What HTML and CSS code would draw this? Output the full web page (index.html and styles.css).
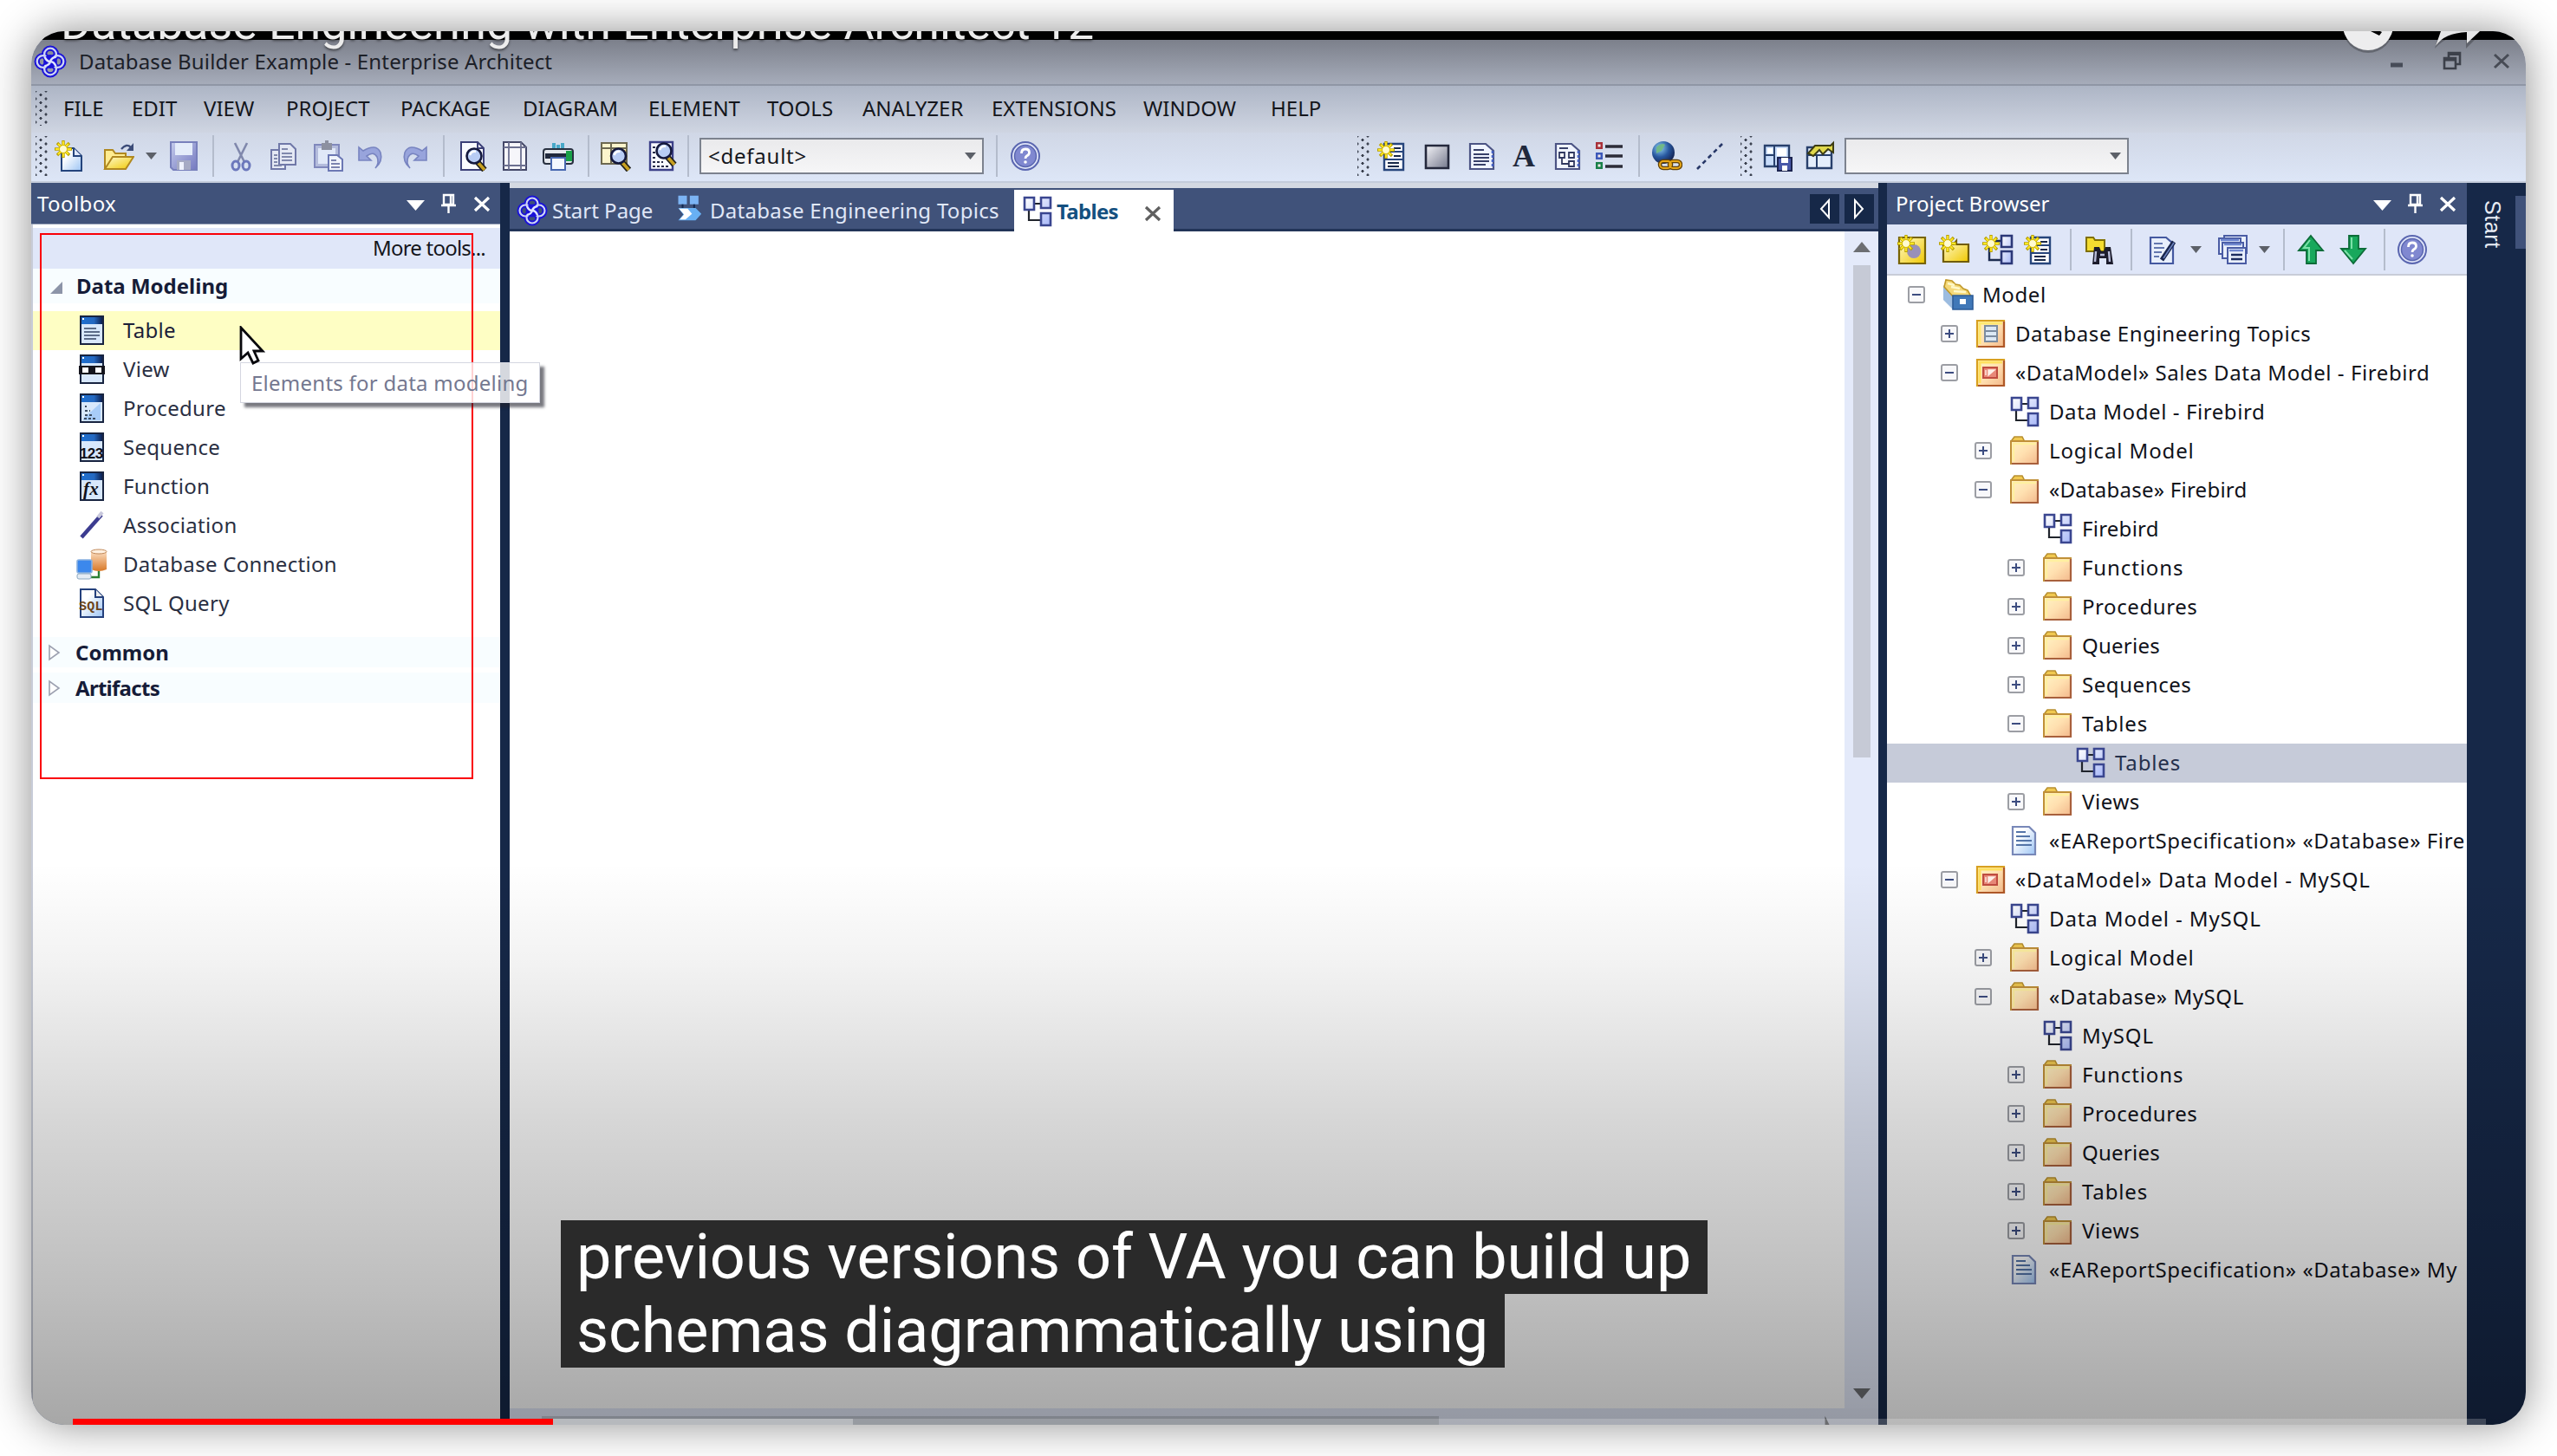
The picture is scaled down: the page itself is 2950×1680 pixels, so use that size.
FILE: index.html
```html
<!DOCTYPE html>
<html lang="en">
<head>
<meta charset="utf-8">
<title>Database Builder Example - Enterprise Architect</title>
<link rel="stylesheet" href="styles.css">
</head>
<body>
<svg class="defs" aria-hidden="true">
  <defs>
    <linearGradient id="gFold" x1="0" y1="0" x2="1" y2="1"><stop offset="0" stop-color="#fff3c4"/><stop offset=".5" stop-color="#ffe0b0"/><stop offset="1" stop-color="#f3b98c"/></linearGradient>
    <linearGradient id="gYel" x1="0" y1="0" x2="1" y2="1"><stop offset="0" stop-color="#fffbd0"/><stop offset="1" stop-color="#f0c800"/></linearGradient>
    <linearGradient id="gPage" x1="0" y1="0" x2="1" y2="1"><stop offset=".3" stop-color="#fff"/><stop offset="1" stop-color="#9cc4f4"/></linearGradient>
    <linearGradient id="gBlue" x1="0" y1="0" x2="1" y2="1"><stop offset="0" stop-color="#fff"/><stop offset="1" stop-color="#a8b8f8"/></linearGradient>
    <linearGradient id="gGrey" x1="0" y1="0" x2="1" y2="1"><stop offset="0" stop-color="#f4f4f8"/><stop offset="1" stop-color="#74788c"/></linearGradient>
    <linearGradient id="gLav" x1="0" y1="0" x2="1" y2="1"><stop offset="0" stop-color="#c4cbec"/><stop offset="1" stop-color="#7479c0"/></linearGradient>
    <linearGradient id="gDb" x1="0" y1="0" x2="0" y2="1"><stop offset="0" stop-color="#ffe8d0"/><stop offset="1" stop-color="#d87828"/></linearGradient>
    <radialGradient id="gGlobe" cx=".35" cy=".3" r=".8"><stop offset="0" stop-color="#8fd0f0"/><stop offset=".5" stop-color="#2858a0"/><stop offset="1" stop-color="#101840"/></radialGradient>
    <linearGradient id="gWin" x1="0" y1="0" x2="1" y2="0"><stop offset="0" stop-color="#1f70d0"/><stop offset=".6" stop-color="#2468c0"/><stop offset="1" stop-color="#0c2050"/></linearGradient>
  </defs>
  <symbol id="star" viewBox="0 0 20 20"><path d="M10 0v20M0 10h20M3 3l14 14M17 3L3 17" stroke="#b8a000" stroke-width="3.4"/><path d="M10 1v18M1 10h18M4 4l12 12M16 4L4 16" stroke="#ffe820" stroke-width="1.8"/><circle cx="10" cy="10" r="4.5" fill="#fffbd0" stroke="#d8bc00"/></symbol>
  <symbol id="lens" viewBox="0 0 26 30"><path d="M15 18l8 9" stroke="#20201c" stroke-width="7"/><path d="M15 18l8 9" stroke="#c8a020" stroke-width="3.5"/><circle cx="11" cy="11" r="8.5" fill="#b8ccf4" stroke="#14183c" stroke-width="2.6"/><path d="M6 10q2-5 7-4" stroke="#fff" stroke-width="2.5" fill="none"/></symbol>
  <symbol id="logo" viewBox="0 0 36 36"><g fill="none" stroke="#1a12d8" stroke-width="6"><circle cx="18" cy="10" r="6.5"/><circle cx="18" cy="26" r="6.5"/><circle cx="10" cy="18" r="6.5"/><circle cx="26" cy="18" r="6.5"/></g><g fill="none" stroke="#cdd4f4" stroke-width="2.2"><circle cx="18" cy="10" r="6.5"/><circle cx="18" cy="26" r="6.5"/><circle cx="10" cy="18" r="6.5"/><circle cx="26" cy="18" r="6.5"/></g><circle cx="18" cy="18" r="7.5" fill="#1a12d8"/><path d="M12 13q2 5 6 5t6 5M24 13q-5 1-6 5t-6 5" stroke="#dfe4ff" stroke-width="2.4" fill="none"/></symbol>
  <symbol id="new" viewBox="0 0 36 36"><path d="M9 9h14l9 9v17H9z" fill="url(#gPage)" stroke="#24447c" stroke-width="2"/><path d="M23 9v9h9" fill="#dfe8fa" stroke="#24447c" stroke-width="2"/><use href="#star" x="1" y="0" width="20" height="20"/></symbol>
  <symbol id="open" viewBox="0 0 36 36"><path d="M2 33V11h9l3 4h12v5" fill="#ffec90" stroke="#b08820" stroke-width="2"/><path d="M2 33l9-14h24l-9 14z" fill="url(#gYel)" stroke="#b08820" stroke-width="2"/><path d="M21 10q6-7 11-2" fill="none" stroke="#3c4c78" stroke-width="2.4"/><path d="M35 3v9h-8z" fill="#3c4c78"/></symbol>
  <symbol id="save" viewBox="0 0 36 36"><path d="M3 2h30v32H6l-3-3z" fill="url(#gLav)" stroke="#7880bc" stroke-width="2"/><path d="M8 3h20v14H8z" fill="#e4ecfa"/><path d="M10 23h16v11H10z" fill="#a6abc4"/><path d="M13 25h5v9h-5z" fill="#eef2fc"/></symbol>
  <symbol id="cut" viewBox="0 0 36 36"><path d="M11 3l11 22M25 3L14 25" stroke="#8088ac" stroke-width="2.6"/><g fill="none" stroke="#6c78bc" stroke-width="3"><ellipse cx="12" cy="29" rx="4" ry="5"/><ellipse cx="24" cy="29" rx="4" ry="5"/></g></symbol>
  <symbol id="copy" viewBox="0 0 36 36"><g fill="#e4e8f4" stroke="#7078a8" stroke-width="2"><path d="M4 11h16v22H4z"/><path d="M13 4h13l6 6v18H13z"/></g><path d="M16 10h7M16 15h12M16 19h12M16 23h12M7 17h4M7 21h4M7 25h4M7 29h9" stroke="#8088ac" stroke-width="2"/></symbol>
  <symbol id="paste" viewBox="0 0 36 36"><path d="M2 5h28v26H2z" fill="#b4bcdc" stroke="#8088bc" stroke-width="2"/><path d="M6 9h20v18H6z" fill="#e0e8f8"/><path d="M10 3h12v8H10z" fill="#8c90a0"/><path d="M14 0h4v4h-4z" fill="#8c90a0"/><path d="M18 17h10l6 5v13H18z" fill="#f0f4fc" stroke="#6c78b4" stroke-width="2"/><path d="M21 23h6M21 27h10M21 31h10" stroke="#7c84b0" stroke-width="2"/></symbol>
  <symbol id="undo" viewBox="0 0 36 36"><path d="M5 8v15h14l-5-5q8-6 12 1 3 7-2 13 9-8 6-18-5-11-20-2z" fill="#98a4dc" stroke="#7884c0" stroke-width="1.6"/></symbol>
  <symbol id="preview" viewBox="0 0 36 36"><path d="M4 2h19l7 7v25H4z" fill="#fafbff" stroke="#3c4078" stroke-width="2"/><path d="M23 2v7h7" fill="none" stroke="#3c4078" stroke-width="2"/><use href="#lens" x="8" y="7" width="26" height="30"/></symbol>
  <symbol id="page" viewBox="0 0 36 36"><path d="M5 2h20l6 6v26H5z" fill="#f6f6fa" stroke="#444868" stroke-width="2"/><path d="M11 2v32M25 2v32M5 8h26M5 29h26" stroke="#6c7090" stroke-width="1.8"/></symbol>
  <symbol id="print" viewBox="0 0 36 36"><path d="M13 9V3M18 9V5M23 9V3" stroke="#48a8c8" stroke-width="4"/><rect x="1" y="10" width="34" height="17" rx="3" fill="#e4e8ee" stroke="#283040" stroke-width="2"/><path d="M3 15h24v6H3z" fill="#20283c"/><path d="M27 12h7v12h-7z" fill="#18a048"/><path d="M10 20h16v14H10z" fill="#f4f8ff" stroke="#4868b0" stroke-width="2"/></symbol>
  <symbol id="search" viewBox="0 0 36 36"><path d="M2 3h29v24H2z" fill="#fbf4cc" stroke="#6c6850" stroke-width="2"/><path d="M2 9h29M13 3v24" stroke="#6c6850" stroke-width="2"/><path d="M16 11h14v14H16z" fill="#f0c870"/><use href="#lens" x="10" y="7" width="27" height="30"/></symbol>
  <symbol id="find" viewBox="0 0 36 36"><path d="M5 2h26v32H5z" fill="#f8f9ff" stroke="#3c4088" stroke-width="2.4"/><path d="M8 8h5M8 14h3M8 20h4M8 25h12M8 30h18" stroke="#282c48" stroke-width="2" stroke-dasharray="3 2"/><use href="#lens" x="10" y="1" width="26" height="30"/></symbol>
  <symbol id="help" viewBox="0 0 36 36"><circle cx="18" cy="18" r="16" fill="#dfe4f8" stroke="#5a66b0" stroke-width="2"/><circle cx="18" cy="18" r="12.5" fill="#8088d0" stroke="#5a66b0" stroke-width="1.5"/><path d="M13.500 15q0-5 4.500-5t4.500 4q0 2.500-3 4-1.500 1-1.500 3" fill="none" stroke="#fff" stroke-width="2.800"/><circle cx="18" cy="25" r="1.800" fill="#fff"/></symbol>
  <symbol id="elem" viewBox="0 0 36 36"><path d="M9 4h22v30H9z" fill="#fdfdff" stroke="#27457c" stroke-width="2.4"/><path d="M9 13h22M9 22h22" stroke="#27457c" stroke-width="2"/><path d="M20 9h8M20 18h8M13 26h13M13 30h13" stroke="#182848" stroke-width="2.200"/><use href="#star" x="1" y="1" width="20" height="20"/></symbol>
  <symbol id="rect" viewBox="0 0 36 36"><path d="M5 6h26v26H5z" fill="url(#gGrey)" stroke="#24283c" stroke-width="2.6"/></symbol>
  <symbol id="doc" viewBox="0 0 36 36"><path d="M5 4h18l9 8v21H5z" fill="#f0f4ff" stroke="#4c5484" stroke-width="2.2"/><path d="M9 11h12M9 16h18M9 20h18M9 24h18M9 28h14" stroke="#384068" stroke-width="2"/><path d="M31 12v20" stroke="#4460c0" stroke-width="2.6" stroke-dasharray="3 2"/></symbol>
  <symbol id="ddoc" viewBox="0 0 36 36"><path d="M5 4h18l9 8v21H5z" fill="#f0f4ff" stroke="#4c5484" stroke-width="2.2"/><path d="M9 9h10" stroke="#384068" stroke-width="2"/><g fill="#fff" stroke="#303860" stroke-width="1.800"><path d="M9 14h6v6H9zM20 14h6v6h-6zM20 24h6v6h-6zM12 20v7h8"/></g><path d="M31 12v20" stroke="#4460c0" stroke-width="2.6" stroke-dasharray="3 2"/></symbol>
  <symbol id="list" viewBox="0 0 36 36"><path d="M2 2h8v8H2z" fill="#a83038"/><path d="M2 14h8v8H2z" fill="#3c58b8"/><path d="M2 25h8v8H2z" fill="#188048"/><path d="M4.500 4.500h3v3h-3zM4.500 16.500h3v3h-3zM4.500 27.500h3v3h-3z" fill="#f4e8e8"/><path d="M13 7h20M13 18h20M13 30h20" stroke="#2c2c38" stroke-width="3.4"/></symbol>
  <symbol id="globe" viewBox="0 0 36 36"><circle cx="14" cy="14" r="13" fill="url(#gGlobe)"/><path d="M6 8q6-6 10-3l-4 7-6 3z" fill="#70b888"/><g fill="none" stroke="#604008" stroke-width="4.500"><rect x="10" y="24" width="13" height="8" rx="4"/><rect x="21" y="24" width="13" height="8" rx="4"/></g><g fill="none" stroke="#e8a818" stroke-width="2"><rect x="10" y="24" width="13" height="8" rx="4"/><rect x="21" y="24" width="13" height="8" rx="4"/></g></symbol>
  <symbol id="dash" viewBox="0 0 36 36"><path d="M3 33L33 3" stroke="#283868" stroke-width="2.600" stroke-dasharray="5 4"/></symbol>
  <symbol id="layout" viewBox="0 0 36 36"><path d="M3 6h28v24H3z" fill="#c8dcfa" stroke="#28406c" stroke-width="2.4"/><path d="M14 6v24M3 17h11" stroke="#28406c" stroke-width="2"/><path d="M6 9h6v6H6zM17 9h11v9H17z" fill="#fff"/><path d="M18 20h16v15H18z" fill="#4858a8" stroke="#1c2450" stroke-width="2"/><path d="M22 20h8v6h-8zM23 29h6v6h-6z" fill="#fff"/></symbol>
  <symbol id="layout2" viewBox="0 0 36 36"><path d="M3 8h28v24H3z" fill="#e4eefc" stroke="#28406c" stroke-width="2.400"/><path d="M14 16v16M3 17h28" stroke="#28406c" stroke-width="2"/><path d="M4 15l8-9h18l3-3v11l-6-4-6 6-4-5-7 7z" fill="#e0d84c" stroke="#3c3c14" stroke-width="2"/></symbol>
  <symbol id="npkg" viewBox="0 0 36 36"><path d="M4 4h30v30H4z" fill="url(#gYel)" stroke="#786400" stroke-width="2.200"/><circle cx="21" cy="20" r="8" fill="#9890b8"/><use href="#star" x="2" y="1" width="20" height="20"/></symbol>
  <symbol id="nfold" viewBox="0 0 36 36"><path d="M5 32V12h12l3-4h0v4h14v20z" fill="url(#gYel)" stroke="#705c00" stroke-width="2.200"/><use href="#star" x="0" y="1" width="20" height="20"/></symbol>
  <symbol id="ndiag" viewBox="0 0 36 36"><path d="M8 16v14h14M14 8h9" stroke="#1c2c50" stroke-width="2.400" fill="none"/><path d="M22 2h12v13H22zM22 20h12v14H22z" fill="url(#gBlue)" stroke="#2c3878" stroke-width="2.600"/><use href="#star" x="0" y="1" width="20" height="20"/></symbol>
  <symbol id="binoc" viewBox="0 0 36 36"><path d="M2 20V4h8l2 3h11v13z" fill="#f4dc30" stroke="#807000" stroke-width="2"/><path d="M9 35l2-20h6l2 5h3l2-5h6l3 20h-8v-7h-8v7z" fill="#1c1c2c"/><path d="M13 20l-1 12M28 20l1 12M18 24h5" stroke="#b8bcd8" stroke-width="2.400"/></symbol>
  <symbol id="edit" viewBox="0 0 36 36"><path d="M4 4h18l8 7v23H4z" fill="#e8effc" stroke="#4458a0" stroke-width="2.200"/><path d="M8 11h10M8 16h12M8 21h9M8 26h6" stroke="#6478b0" stroke-width="2"/><path d="M31 9L17 30" stroke="#18244c" stroke-width="5"/><path d="M31 10L19 28" stroke="#6c84c0" stroke-width="1.500"/></symbol>
  <symbol id="stack" viewBox="0 0 36 36"><g fill="#eaf0fc" stroke="#4a5ca4" stroke-width="2"><path d="M8 2h26v20H8z"/><path d="M2 5h25v18H2z"/><path d="M6 10h24v18H6z"/><path d="M12 16h21v18H12z"/></g><path d="M4 7h21M8 12h20M14 19h16" stroke="#7088d0" stroke-width="2.600"/><path d="M16 24h13M16 29h13" stroke="#1c2c60" stroke-width="2.400"/></symbol>
  <symbol id="up" viewBox="0 0 36 36"><path d="M18 2l14 17h-8v15H13V19H4z" fill="#18a85c" stroke="#0c6c38" stroke-width="1.800"/><path d="M17 7l-7 9h6v15" fill="none" stroke="#7ce0a8" stroke-width="2"/></symbol>
  <symbol id="down" viewBox="0 0 36 36"><path d="M18 34L4 17h9V2h11v15h8z" fill="#18a85c" stroke="#0c6c38" stroke-width="1.800"/><path d="M8 19l9 10M16 4v13" fill="none" stroke="#7ce0a8" stroke-width="2"/></symbol>
  <symbol id="diag" viewBox="0 0 36 36"><path d="M14 9h8M8 16v12h14" stroke="#20242c" stroke-width="2.200" fill="none"/><path d="M3 2h11v14H3zM22 2h11v12H22zM22 20h11v14H22z" fill="url(#gBlue)" stroke="#3a4690" stroke-width="2.600"/></symbol>
  <symbol id="topic" viewBox="0 0 36 36"><path d="M3 1h12v12H3zM19 1h12v12H19z" fill="#7cb4f4"/><path d="M9 13v5M25 13v5" stroke="#102850" stroke-width="2.400"/><path d="M3 18h24l8 8-8 9H3l7-8z" fill="#68b0f4"/><path d="M4 19h12l6 7-9 8H5l6-7z" fill="#fff"/></symbol>
  <symbol id="fold" viewBox="0 0 36 36"><path d="M3 6l3-4h9l2 4v2H3z" fill="#f0c850" stroke="#b89030" stroke-width="1.600"/><path d="M2 7h31v26H2z" fill="url(#gFold)" stroke="#c09038" stroke-width="2"/><path d="M3 33h30V8" fill="none" stroke="#a8603c" stroke-width="2.200"/><path d="M5 30V10h26" fill="none" stroke="#fff0a0" stroke-width="2.400"/></symbol>
  <symbol id="pkg" viewBox="0 0 36 36"><path d="M2 3h31v30H2z" fill="url(#gFold)" stroke="#d8a020" stroke-width="2.200"/><path d="M3 33h30V4" fill="none" stroke="#b05828" stroke-width="2.200"/><path d="M5 30V6h26" fill="none" stroke="#ffe870" stroke-width="3"/><path d="M11 9h14v18H11z" fill="#dce8f4" stroke="#7c8ca0" stroke-width="2"/><path d="M11 15h14M11 21h14" stroke="#7c8ca0" stroke-width="2"/></symbol>
  <symbol id="dm" viewBox="0 0 36 36"><path d="M2 3h31v30H2z" fill="url(#gFold)" stroke="#d8a020" stroke-width="2.200"/><path d="M3 33h30V4" fill="none" stroke="#b05828" stroke-width="2.200"/><path d="M5 30V6h26" fill="none" stroke="#ffe060" stroke-width="3"/><path d="M9 12h16v12H9z" fill="#e88878" stroke="#c04c40" stroke-width="2"/><path d="M12 15v6M15 15h7l-7 6z" fill="#fff0e8" stroke="#fff0e8" stroke-width="1.400"/></symbol>
  <symbol id="cabinet" viewBox="0 0 36 36"><path d="M1 7l11 12v16L1 24z" fill="#9cbce0"/><path d="M2 9L4 1l7 1 4 4 5 1 4 4 5 2 4 7H12z" fill="#f4d878" stroke="#c09828" stroke-width="1.600"/><path d="M6 5l8 2M10 9l10 2M13 14l14 1" stroke="#fff8c8" stroke-width="2.600"/><path d="M12 19h23v16H12z" fill="#4078b8" stroke="#2c5c98" stroke-width="1.600"/><path d="M20 23h7v6h-7z" fill="#fff"/></symbol>
  <symbol id="rep" viewBox="0 0 36 36"><path d="M4 2h19l7 7v25H4z" fill="url(#gPage)" stroke="#7888b8" stroke-width="2.200"/><path d="M8 8h11M8 13h16M8 18h18M8 23h18" stroke="#5474a8" stroke-width="1.800"/></symbol>
  <symbol id="win" viewBox="0 0 28 36"><path d="M1 2h26v32H1z" fill="#d8e8fc" stroke="#182440" stroke-width="2"/><path d="M2 3h24v8H2z" fill="url(#gWin)"/><path d="M3 4h2v2H3z" fill="#fff"/></symbol>
  <symbol id="tbl" viewBox="-4 0 36 36"><use href="#win" width="28" height="36"/><path d="M5 16h14M5 20h18M5 24h18M5 28h14" stroke="#5c6c88" stroke-width="2"/></symbol>
  <symbol id="view" viewBox="-4 0 36 36"><use href="#win" width="28" height="36"/><path d="M-1 14h30v10H-1z" fill="#14141c"/><path d="M3 16h7v6H3zM18 16h7v6h-7z" fill="#fff"/></symbol>
  <symbol id="proc" viewBox="-4 0 36 36"><use href="#win" width="28" height="36"/><path d="M4 30L24 12v20H4z" fill="#a8ccf8"/><path d="M6 16h2M6 21h6M6 26h8M5 30h14" stroke="#3c4c60" stroke-width="2" stroke-dasharray="3 2"/></symbol>
  <symbol id="assoc" viewBox="-4 0 36 36"><path d="M2 32L25 6" stroke="#3c3c90" stroke-width="4.500"/><path d="M21 9l5-6" stroke="#c8c8dc" stroke-width="4"/></symbol>
  <symbol id="dbc" viewBox="-4 0 36 36"><path d="M13 3q9-4 18 0v21q-9 4-18 0z" fill="url(#gDb)"/><ellipse cx="22" cy="3.500" rx="9" ry="2.500" fill="#fff0e0" stroke="#c08858"/><path d="M22 26v7h-9" stroke="#2c8034" stroke-width="2.400" fill="none"/><rect x="-3" y="13" width="17" height="15" rx="2" fill="#3c88ec" stroke="#88b0e0" stroke-width="1.600"/><rect x="-3" y="29" width="16" height="6" rx="2" fill="#e4ecf4" stroke="#8ca8c0"/></symbol>
  <symbol id="caret" viewBox="0 0 36 36"><path d="M12 14h13l-6.500 8z" fill="#5c6068"/></symbol>
  <symbol id="sep" viewBox="0 0 36 50"><path d="M18 1v48" stroke="#b4bccc" stroke-width="2"/></symbol>
  <symbol id="menu" viewBox="0 0 24 24"><path d="M1 8h21L11.500 20z" fill="#fff"/></symbol>
  <symbol id="pin" viewBox="0 0 24 24"><path d="M6 2h11v11H6zM14 2v11M3 14h17M11.500 14v9" fill="none" stroke="#fff" stroke-width="2.400"/></symbol>
  <symbol id="x" viewBox="0 0 24 24"><path d="M4 5l16 15M20 5L4 20" fill="none" stroke="currentColor" stroke-width="3.200"/></symbol>
</svg>

<main class="player">
  <header class="titlebar">
    <svg class="ic"><use href="#logo"/></svg>
    <span class="t">Database Builder Example - Enterprise Architect</span>
    <svg class="winctl" viewBox="0 0 140 30"><path d="M6 19h14" stroke="#474c58" stroke-width="5"/><path d="M68 11h13v12H68zM73 10V5h13v13h-5" fill="none" stroke="#3c404a" stroke-width="2.600"/><path d="M68 12.500h13M73 6h13" stroke="#3c404a" stroke-width="4"/><path d="M126 7l16 15M142 7l-16 15" stroke="#474b55" stroke-width="3"/></svg>
  </header>

  <nav class="menubar">
    <span class="grip"></span>
    <span class="t">FILE</span><span class="t">EDIT</span><span class="t">VIEW</span><span class="t">PROJECT</span><span class="t">PACKAGE</span><span class="t">DIAGRAM</span><span class="t">ELEMENT</span><span class="t">TOOLS</span><span class="t">ANALYZER</span><span class="t">EXTENSIONS</span><span class="t">WINDOW</span><span class="t">HELP</span>
  </nav>

  <div class="toolbar">
    <span class="grip"></span>
    <svg class="ic"><use href="#new"/></svg>
    <svg class="ic"><use href="#open"/></svg>
    <svg class="ic"><use href="#caret"/></svg>
    <svg class="ic"><use href="#save"/></svg>
    <svg class="sep"><use href="#sep"/></svg>
    <svg class="ic"><use href="#cut"/></svg>
    <svg class="ic"><use href="#copy"/></svg>
    <svg class="ic"><use href="#paste"/></svg>
    <svg class="ic"><use href="#undo"/></svg>
    <svg class="ic flip"><use href="#undo"/></svg>
    <svg class="sep"><use href="#sep"/></svg>
    <svg class="ic"><use href="#preview"/></svg>
    <svg class="ic"><use href="#page"/></svg>
    <svg class="ic"><use href="#print"/></svg>
    <svg class="sep"><use href="#sep"/></svg>
    <svg class="ic"><use href="#search"/></svg>
    <svg class="ic"><use href="#find"/></svg>
    <svg class="sep"><use href="#sep"/></svg>
    <div class="combo"><span class="t">&lt;default&gt;</span><svg class="ic"><use href="#caret"/></svg></div>
    <svg class="sep"><use href="#sep"/></svg>
    <svg class="ic"><use href="#help"/></svg>
    <span class="grip"></span>
    <svg class="ic"><use href="#elem"/></svg>
    <svg class="ic"><use href="#rect"/></svg>
    <svg class="ic"><use href="#doc"/></svg>
    <span class="letter">A</span>
    <svg class="ic"><use href="#ddoc"/></svg>
    <svg class="ic"><use href="#list"/></svg>
    <svg class="sep"><use href="#sep"/></svg>
    <svg class="ic"><use href="#globe"/></svg>
    <svg class="ic"><use href="#dash"/></svg>
    <span class="grip"></span>
    <svg class="ic"><use href="#layout"/></svg>
    <svg class="ic"><use href="#layout2"/></svg>
    <div class="combo"><svg class="ic"><use href="#caret"/></svg></div>
  </div>

  <div class="work">
    <section class="toolbox">
      <header class="pane-head"><span class="t">Toolbox</span><svg><use href="#menu"/></svg><svg><use href="#pin"/></svg><svg><use href="#x"/></svg></header>
      <div class="more"><span class="t">More tools...</span></div>
      <h3 class="group open"><svg viewBox="0 0 16 16"><path d="M15 1v14H1z" fill="#8c94a8"/></svg><span class="t">Data Modeling</span></h3>
      <ul class="tools">
        <li class="hot"><svg class="ic"><use href="#tbl"/></svg><span class="t">Table</span></li>
        <li><svg class="ic"><use href="#view"/></svg><span class="t">View</span></li>
        <li><svg class="ic"><use href="#proc"/></svg><span class="t">Procedure</span></li>
        <li><svg class="ic" viewBox="-4 0 36 36"><use href="#win" width="28" height="36"/><text x="0" y="31" class="glyph-num">123</text></svg><span class="t">Sequence</span></li>
        <li><svg class="ic" viewBox="-4 0 36 36"><use href="#win" width="28" height="36"/><text x="4" y="28" class="glyph-fx">fx</text></svg><span class="t">Function</span></li>
        <li><svg class="ic"><use href="#assoc"/></svg><span class="t">Association</span></li>
        <li><svg class="ic"><use href="#dbc"/></svg><span class="t">Database Connection</span></li>
        <li><svg class="ic" viewBox="-4 0 36 36"><path d="M1 2h17l9 9v23H1z" fill="url(#gPage)" stroke="#24407c" stroke-width="2"/><path d="M18 2v9h9" fill="#eee" stroke="#24407c" stroke-width="2"/><text x="-1" y="26" class="glyph-sql">SQL</text></svg><span class="t">SQL Query</span></li>
      </ul>
      <h3 class="group"><svg viewBox="0 0 16 20"><path d="M2 2v16l11-8z" fill="#fff" stroke="#9ca0b0" stroke-width="1.600"/></svg><span class="t">Common</span></h3>
      <h3 class="group tight"><svg viewBox="0 0 16 20"><path d="M2 2v16l11-8z" fill="#fff" stroke="#9ca0b0" stroke-width="1.600"/></svg><span class="t">Artifacts</span></h3>
    </section>

    <section class="editor">
      <div class="tabs">
        <div class="tab start"><svg class="ic"><use href="#logo"/></svg><span class="t">Start Page</span></div>
        <div class="tab topics"><svg class="ic small"><use href="#topic"/></svg><span class="t">Database Engineering Topics</span></div>
        <div class="tab active"><svg class="ic"><use href="#diag"/></svg><span class="t">Tables</span><svg class="close"><use href="#x"/></svg></div>
        <svg class="nav" viewBox="0 0 34 34"><path d="M22 7v20L13 17z" fill="none" stroke="#fff" stroke-width="2"/></svg>
        <svg class="nav" viewBox="0 0 34 34"><path d="M12 7v20l9-10z" fill="none" stroke="#fff" stroke-width="2"/></svg>
      </div>
      <div class="canvas">
        <div class="vscroll"><svg viewBox="0 0 20 12"><path d="M0 12h20L10 0z" fill="#6c6e72"/></svg><i class="thumb"></i><svg viewBox="0 0 20 12"><path d="M0 0h20L10 12z" fill="#6c6e72"/></svg></div>
      </div>
      <div class="hscroll"><i class="thumb"></i><svg viewBox="0 0 10 20"><path d="M0 0v20h10z" fill="#6c6e72"/></svg></div>
    </section>

    <section class="browser">
      <header class="pane-head"><span class="t">Project Browser</span><svg><use href="#menu"/></svg><svg><use href="#pin"/></svg><svg><use href="#x"/></svg></header>
      <div class="pbar">
        <svg class="ic"><use href="#npkg"/></svg>
        <svg class="ic"><use href="#nfold"/></svg>
        <svg class="ic"><use href="#ndiag"/></svg>
        <svg class="ic"><use href="#elem"/></svg>
        <svg class="sep"><use href="#sep"/></svg>
        <svg class="ic"><use href="#binoc"/></svg>
        <svg class="sep"><use href="#sep"/></svg>
        <svg class="ic"><use href="#edit"/></svg>
        <svg class="ic"><use href="#caret"/></svg>
        <svg class="ic"><use href="#stack"/></svg>
        <svg class="ic"><use href="#caret"/></svg>
        <svg class="sep"><use href="#sep"/></svg>
        <svg class="ic"><use href="#up"/></svg>
        <svg class="ic"><use href="#down"/></svg>
        <svg class="sep"><use href="#sep"/></svg>
        <svg class="ic"><use href="#help"/></svg>
      </div>
      <ul class="tree">
        <li class="l0"><b class="ex"></b><svg class="ic"><use href="#cabinet"/></svg><span class="t">Model</span></li>
        <li class="l1"><b class="ex plus"></b><svg class="ic"><use href="#pkg"/></svg><span class="t">Database Engineering Topics</span></li>
        <li class="l1"><b class="ex"></b><svg class="ic"><use href="#dm"/></svg><span class="t">«DataModel» Sales Data Model - Firebird</span></li>
        <li class="l2"><b></b><svg class="ic"><use href="#diag"/></svg><span class="t">Data Model - Firebird</span></li>
        <li class="l2"><b class="ex plus"></b><svg class="ic"><use href="#fold"/></svg><span class="t wide">Logical Model</span></li>
        <li class="l2"><b class="ex"></b><svg class="ic"><use href="#fold"/></svg><span class="t snug">«Database» Firebird</span></li>
        <li class="l3"><b></b><svg class="ic"><use href="#diag"/></svg><span class="t snug">Firebird</span></li>
        <li class="l3"><b class="ex plus"></b><svg class="ic"><use href="#fold"/></svg><span class="t wide">Functions</span></li>
        <li class="l3"><b class="ex plus"></b><svg class="ic"><use href="#fold"/></svg><span class="t">Procedures</span></li>
        <li class="l3"><b class="ex plus"></b><svg class="ic"><use href="#fold"/></svg><span class="t snug">Queries</span></li>
        <li class="l3"><b class="ex plus"></b><svg class="ic"><use href="#fold"/></svg><span class="t">Sequences</span></li>
        <li class="l3"><b class="ex"></b><svg class="ic"><use href="#fold"/></svg><span class="t wide">Tables</span></li>
        <li class="l4 sel"><b></b><svg class="ic"><use href="#diag"/></svg><span class="t wide">Tables</span></li>
        <li class="l3"><b class="ex plus"></b><svg class="ic"><use href="#fold"/></svg><span class="t">Views</span></li>
        <li class="l2"><b></b><svg class="ic"><use href="#rep"/></svg><span class="t">«EAReportSpecification» «Database» Fire</span></li>
        <li class="l1"><b class="ex"></b><svg class="ic"><use href="#dm"/></svg><span class="t wide">«DataModel» Data Model - MySQL</span></li>
        <li class="l2"><b></b><svg class="ic"><use href="#diag"/></svg><span class="t wide">Data Model - MySQL</span></li>
        <li class="l2"><b class="ex plus"></b><svg class="ic"><use href="#fold"/></svg><span class="t wide">Logical Model</span></li>
        <li class="l2"><b class="ex"></b><svg class="ic"><use href="#fold"/></svg><span class="t">«Database» MySQL</span></li>
        <li class="l3"><b></b><svg class="ic"><use href="#diag"/></svg><span class="t wide">MySQL</span></li>
        <li class="l3"><b class="ex plus"></b><svg class="ic"><use href="#fold"/></svg><span class="t wide">Functions</span></li>
        <li class="l3"><b class="ex plus"></b><svg class="ic"><use href="#fold"/></svg><span class="t">Procedures</span></li>
        <li class="l3"><b class="ex plus"></b><svg class="ic"><use href="#fold"/></svg><span class="t snug">Queries</span></li>
        <li class="l3"><b class="ex plus"></b><svg class="ic"><use href="#fold"/></svg><span class="t wide">Tables</span></li>
        <li class="l3"><b class="ex plus"></b><svg class="ic"><use href="#fold"/></svg><span class="t">Views</span></li>
        <li class="l2"><b></b><svg class="ic"><use href="#rep"/></svg><span class="t">«EAReportSpecification» «Database» My</span></li>
      </ul>
    </section>

    <aside class="rail"><span class="vert">Start</span><i></i></aside>
  </div>

  <div class="outline"></div>
  <div class="tooltip"><span class="t">Elements for data modeling</span></div>
  <svg class="cursor" viewBox="0 0 34 48"><path d="M2 2v36l8-7 6 12 6-3-5-11h10z" fill="#fff" stroke="#08080c" stroke-width="2.800"/></svg>

  <div class="shade"></div>

  <div class="overlay-top"></div>
  <div class="overlay-title">Database Engineering with Enterprise Architect 12</div>
  <svg class="overlay-icons" viewBox="0 0 170 28"><circle cx="32" cy="-4" r="29" fill="#000" opacity=".25"/><circle cx="32" cy="-7" r="29" fill="#ededee"/><path d="M35 0l10 5 3-4-2-1z" fill="#000"/><path d="M114 2l-5 18Q122 5 145 4v16l20-20z" fill="#000" opacity=".25"/><path d="M116 0l-6 17Q120 2 146 1v13L161 0z" fill="#e6e6e7"/></svg>

  <div class="captions">
    <p>previous versions of VA you can build up</p>
    <p>schemas diagrammatically using</p>
  </div>
  <div class="progress"><i class="played"></i><i class="loaded"></i></div>
</main>
</body>
</html>
```
FILE: styles.css
```css
* { box-sizing: border-box; }
body {
  margin: 0;
  padding: 36px;
  width: 2950px;
  height: 1680px;
  overflow: hidden;
  background: #fff;
  font-family: "Noto Sans", "Open Sans", sans-serif;
  font-size: 24px;
  color: #14161c;
}
ul, h3, p { margin: 0; padding: 0; list-style: none; font-size: inherit; }
.defs { position: absolute; width: 0; height: 0; }
.t { white-space: nowrap; line-height: 1; }
.ic { width: 36px; height: 36px; flex: none; display: block; }
.flip { transform: scaleX(-1); }
.sep { width: 36px; height: 50px; display: block; }
.glyph-num { font: bold 17px "Liberation Sans", sans-serif; fill: #101018; letter-spacing: -.6px; }
.glyph-fx { font: italic bold 21px "Liberation Serif", serif; fill: #101018; }
.glyph-sql { font: bold 15px "Liberation Mono", monospace; fill: #6c4418; }

.player {
  position: relative;
  display: flex;
  flex-direction: column;
  width: 2878px;
  height: 1608px;
  border-radius: 38px;
  overflow: hidden;
  background: #fff;
}
body::before {
  content: "";
  position: absolute;
  left: 36px;
  top: 36px;
  width: 2878px;
  height: 1608px;
  border-radius: 38px;
  box-shadow: 0 0 50px rgba(0, 0, 0, .45);
}

.titlebar {
  display: flex;
  align-items: center;
  height: 63px;
  padding: 8px 22px 0 3px;
  background: linear-gradient(#7c808b 10px, #a6acba);
  border-bottom: 2px solid #8f96a5;
  color: #1c2028;
  letter-spacing: .16px;
}
.titlebar .ic { margin-right: 14px; width: 38px; height: 38px; }
.winctl { margin-left: auto; width: 140px; height: 30px; overflow: visible; }

.menubar {
  display: grid;
  grid-template-columns: 37px 79px 83px 95px 132px 141px 145px 137px 110px 149px 175px 147px 100px;
  align-items: center;
  height: 54px;
  padding-bottom: 3px;
  background: linear-gradient(#adb5c5, #cfd5e2);
}
.grip {
  width: 14px;
  height: 46px;
  margin-left: 5px;
  background:
    radial-gradient(circle, #3c4250 1.4px, transparent 1.8px) 0 0 / 12px 9px,
    radial-gradient(circle, #3c4250 1.4px, transparent 1.8px) 6px 4.5px / 12px 9px;
}
.menubar .grip { height: 40px; }

.toolbar {
  display: grid;
  grid-template-columns: 26px 57px 37px 38px 34px 32px 49px 52px 48px 52px 33px 34px 48px 50px 35px 31px 53px 31px 31px 325px 33px 396px 27px 52px 51px 49px 50px 49px 34px 32px 50px 48px 30px 49px 46px 328px;
  align-items: center;
  height: 58px;
  padding-bottom: 3px;
  background: linear-gradient(#d0d7e6, #dde6f7);
  border-bottom: 2px solid #c4ccdb;
}
.combo {
  display: flex;
  align-items: center;
  justify-content: space-between;
  width: 328px;
  height: 42px;
  padding-left: 8px;
  border: 2px solid #7c828e;
  background: linear-gradient(#eaeaec, #f6f6f7);
  letter-spacing: .76px;
}
.combo .ic { margin-right: -4px; }
.combo .ic:only-child { margin-left: auto; }
.letter { font: bold 36px/36px "Liberation Serif", serif; width: 36px; text-align: center; color: #20283c; }

.work { display: flex; flex: 1; min-height: 0; background: #162848; }
.pane-head {
  display: grid;
  align-items: center;
  height: 48px;
  background: #40527a;
  color: #fff;
}
.pane-head svg { width: 24px; height: 24px; }

.toolbox {
  display: flex;
  flex-direction: column;
  width: 541px;
  background: #fff;
  border-left: 2px solid #c8ccd8;
}
.toolbox .pane-head { grid-template-columns: 425px 38px 38px 1fr; padding-left: 7px; margin-left: -2px; border-bottom: 1px solid #8c98b0; letter-spacing: .4px; }
.more {
  display: flex;
  justify-content: flex-end;
  align-items: center;
  height: 47px;
  margin-top: 4px;
  padding: 0 17px 2px 0;
  background: #e0e7f9;
  letter-spacing: -.78px;
}
.group {
  display: flex;
  align-items: center;
  height: 35px;
  margin-bottom: 6px;
  background: #f8fdff;
  color: #161c38;
  font-weight: bold;
}
.group svg { width: 16px; height: 20px; margin: 0 16px 0 17px; }
.group.open { height: 40px; margin-bottom: 10px; }
.group.open svg { height: 16px; margin: 3px 15px 0 19px; }
.group.tight { letter-spacing: -.72px; }
.tools { padding-bottom: 16px; margin-top: -1px; letter-spacing: .3px; }
.tools li { display: flex; align-items: center; height: 45px; padding: 0 0 2px 50px; color: #2a2f42; }
.tools .hot { background: #fefec4; color: #1c2038; }
.tools .ic { margin-right: 18px; }

.editor {
  display: flex;
  flex-direction: column;
  width: 1579px;
  margin-left: 11px;
  border-top: 6px solid #d4d9e2;
  background: #fff;
}
.tabs { display: flex; height: 50px; background: #40527a; border-bottom: 3px solid #223458; color: #e0e8f8; }
.tab { display: flex; align-items: center; }
.tab.start { padding-left: 8px; width: 188px; padding-top: 4px; }
.tab.start .ic { margin-right: 5px; }
.tab.topics { width: 394px; padding-top: 4px; letter-spacing: .3px; }
.tab .small { width: 30px; height: 30px; margin: -6px 9px 0 4px; }
.tab.active { width: 184px; height: 50px; margin-top: 2px; padding-left: 9px; background: #fff; color: #145080; font-weight: bold; letter-spacing: -.67px; }
.tab.active .t { margin-left: 4px; }
.tab .close { width: 24px; height: 24px; margin: 3px 12px 0 auto; color: #606060; }
.nav { width: 34px; height: 34px; margin: 7px 5px 0 0; background: #162848; }
.tab.active + .nav { margin-left: auto; margin-right: 6px; }
.canvas { display: flex; justify-content: flex-end; flex: 1; min-height: 0; }
.vscroll { display: flex; flex-direction: column; align-items: center; width: 39px; padding: 12px 0 11px; background: #e4eafa; }
.vscroll svg { width: 20px; height: 12px; }
.vscroll .thumb { width: 20px; height: 568px; margin: 15px 0 auto; background: #c6cad6; }
.hscroll { display: flex; align-items: flex-end; height: 19px; padding-left: 37px; background: #e2e8f8; }
.hscroll .thumb { width: 1035px; height: 10px; background: #c0c6d2; }
.hscroll svg { width: 10px; height: 10px; margin-left: 443px; }

.browser { width: 669px; margin-left: 10px; background: #fff; display: flex; flex-direction: column; overflow: hidden; }
.browser .pane-head { grid-template-columns: 550px 38px 37px 1fr; padding-left: 10px; }
.pbar {
  display: grid;
  grid-template-columns: 50px 50px 47px 37px 34px 36px 36px 38px 43px 36px 23px 31px 49px 36px 32px 36px;
  align-items: center;
  height: 59px;
  padding-left: 10px;
  background: #dfe6f8;
  border-bottom: 2px solid #c8ccd8;
}
.tree { margin-top: 0; color: #10121a; letter-spacing: .58px; }
.tree li { display: flex; align-items: center; height: 45px; padding-bottom: 1px; }
.tree .t { margin-top: -1px; white-space: nowrap; }
.tree .wide { letter-spacing: .88px; }
.tree .snug { letter-spacing: .25px; }
.tree b { width: 20px; height: 20px; margin-right: 20px; flex: none; }
.tree .ex {
  border: 2px solid #9c9ea4;
  border-radius: 3px;
  background: linear-gradient(#3c4c80, #3c4c80) center / 10px 2px no-repeat, #f8f8fa;
}
.tree .plus {
  background:
    linear-gradient(#3c4c80, #3c4c80) center / 10px 2px no-repeat,
    linear-gradient(#3c4c80, #3c4c80) center / 2px 10px no-repeat, #f8f8fa;
}
.tree .ic { margin-right: 10px; }
.tree .l0 { padding-left: 24px; }
.tree .l1 { padding-left: 62px; }
.tree .l2 { padding-left: 101px; }
.tree .l3 { padding-left: 139px; }
.tree .l4 { padding-left: 177px; }
.tree .sel { background: #c6cbd9; color: #24304c; }

.rail { display: flex; flex: 1; justify-content: space-between; }
.vert { writing-mode: vertical-rl; margin: 20px 0 0 16px; color: #e8ecf4; font: 25px/28px "Liberation Sans", sans-serif; letter-spacing: .6px; }
.rail i { width: 12px; height: 61px; margin-top: 15px; background: #40527a; }

.outline { position: absolute; left: 10px; top: 233px; width: 500px; height: 630px; border: 2px solid #fa0008; }
.tooltip {
  position: absolute;
  left: 241px;
  top: 382px;
  display: flex;
  align-items: center;
  width: 346px;
  height: 47px;
  padding-left: 12px;
  background: rgba(255, 255, 255, .82);
  border: 1px solid #d4d6e0;
  box-shadow: 5px 5px 3px rgba(30, 32, 44, .6);
  color: #747890;
  letter-spacing: .25px;
}
.cursor { position: absolute; left: 240px; top: 340px; width: 34px; height: 48px; }

.shade {
  position: absolute;
  inset: 960px 0 0;
  background: linear-gradient(rgba(0, 0, 0, 0), rgba(0, 0, 0, .05) 18%, rgba(0, 0, 0, .16) 46%, rgba(0, 0, 0, .26) 77%, rgba(0, 0, 0, .345));
}
.overlay-top { position: absolute; inset: 0 0 auto; height: 10px; background: #000; }
.overlay-title {
  position: absolute;
  left: 34px;
  top: -39px;
  font: 53.7px/60px Roboto, sans-serif;
  color: #ececec;
  text-shadow: 0 2px 3px rgba(0, 0, 0, .5);
  white-space: nowrap;
}
.overlay-icons { position: absolute; left: 2664px; top: 0; width: 170px; height: 28px; }

.captions { position: absolute; left: 611px; top: 1372px; font: 72px/85px Roboto, sans-serif; letter-spacing: -.09px; color: #fff; }
.captions p { width: fit-content; height: 85px; padding: 0 19px 0 18px; background: #2a2a2a; white-space: nowrap; }

.progress { position: absolute; left: 48px; bottom: 0; display: flex; width: 2784px; height: 7px; background: rgba(255, 255, 255, .2); }
.played { width: 554px; background: #f00; }
.loaded { width: 346px; background: rgba(255, 255, 255, .3); }
```
